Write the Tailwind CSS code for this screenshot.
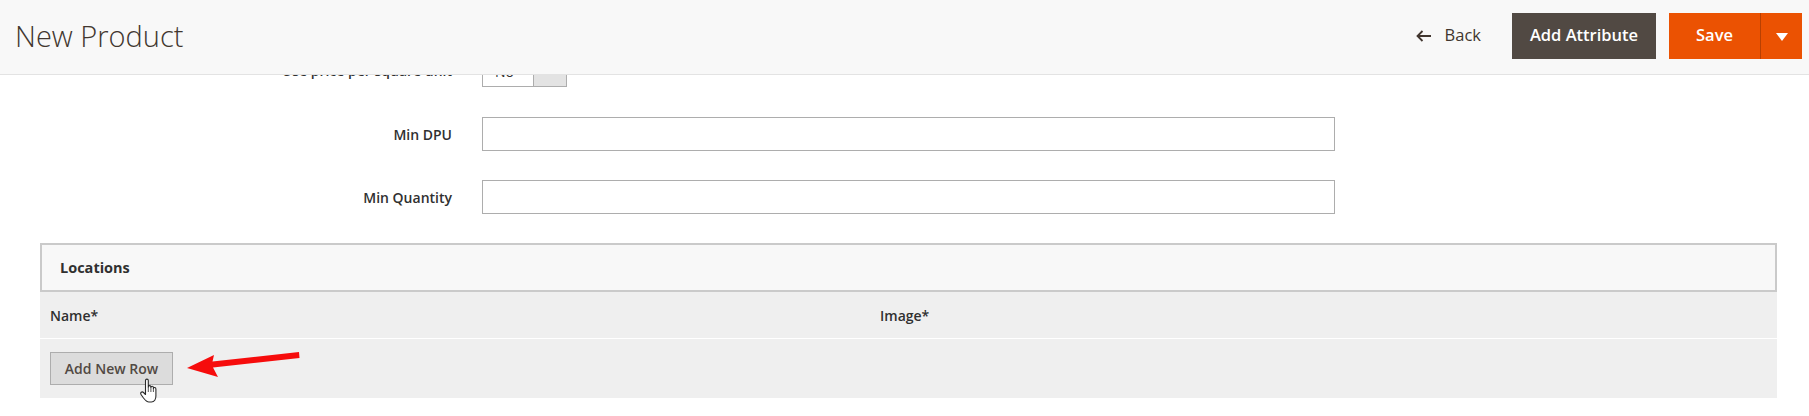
<!DOCTYPE html>
<html lang="en">
<head>
  <meta charset="UTF-8" />
  <title>New Product</title>
  <script src="https://cdn.jsdelivr.net/npm/@tailwindcss/browser@4"></script>
</head>
<body class="bg-white font-['Open_Sans',sans-serif] text-[14px] text-[#303030] overflow-hidden">

  <header class="fixed top-0 left-0 w-full h-[75px] z-10 flex items-center justify-between bg-[#f8f8f8] border-b border-[#e3e3e3] pl-[15px] pr-[7px]">
    <h1 class="text-[29px] font-light text-[#41362f] leading-none -mt-[4px]">New Product</h1>
    <div class="flex items-center -mt-[2px] text-[16.500px]">
      <button class="flex items-center gap-[14px] font-medium text-[#41362f] mr-[31px]">
        <svg width="15" height="12" viewBox="0 0 15 12" fill="none" stroke="#41362f" stroke-width="1.800"><path d="M15 6H1.500M6.500 1 1.500 6l5 5" /></svg>
        <span class="-mt-[2px]">Back</span>
      </button>
      <button class="w-[144px] h-[46px] bg-[#514943] text-white font-semibold pb-[2px]">Add Attribute</button>
      <div class="flex ml-[13px] h-[46px] bg-[#eb5202] text-white font-semibold">
        <button class="w-[91px] pb-[2px]">Save</button>
        <button class="w-[42px] border-l border-[#b84002] flex items-center justify-center">
          <span class="w-0 h-0 border-x-[6px] border-x-transparent border-t-[8px] border-t-white mt-[2px]"></span>
        </button>
      </div>
    </div>
  </header>

  <main class="pt-[53px]">
    <div class="flex items-center h-[34px]">
      <label class="w-[452px] text-right font-semibold">Use price per square unit</label>
      <div class="flex ml-[30px] w-[85px] h-[34px] border border-[#adadad]">
        <span class="w-[51px] border-r border-[#adadad] pl-[12px] pt-[2px] leading-[32px]">No</span>
        <span class="flex-1 bg-[#e3e3e3]"></span>
      </div>
    </div>
    <div class="flex items-center mt-[30px]">
      <label class="w-[452px] text-right font-semibold">Min DPU</label>
      <input type="text" class="ml-[30px] w-[853px] h-[34px] border border-[#adadad] bg-white" />
    </div>
    <div class="flex items-center mt-[29px]">
      <label class="w-[452px] text-right font-semibold">Min Quantity</label>
      <input type="text" class="ml-[30px] w-[853px] h-[34px] border border-[#adadad] bg-white" />
    </div>

    <section class="ml-[40px] w-[1737px] mt-[29px]">
      <div class="h-[49px] flex items-center pl-[18px] bg-[#f8f8f8] border-2 border-[#cacaca] font-bold text-[14.500px]">Locations</div>
      <div class="flex items-center h-[47px] bg-[#efefef] font-semibold pl-[10px] border-b border-white">
        <span class="w-[830px]">Name*</span>
        <span>Image*</span>
      </div>
      <div class="h-[59px] bg-[#efefef] pt-[13px] pl-[10px]">
        <button class="w-[123px] h-[33px] bg-[#dcdcdc] border border-[#adadad] text-[#514943] font-semibold">Add New Row</button>
      </div>
    </section>
  </main>

  <!-- annotation arrow -->
  <svg class="absolute left-[185px] top-[350px]" width="116" height="28" viewBox="0 0 116 28">
    <path d="M2 18 29 5 27.500 11.500 114 2 114.500 8 28 17.500 33 27Z" fill="#f60c0c" />
  </svg>

  <!-- hand cursor -->
  <svg class="absolute left-[139px] top-[377px]" width="20" height="27" viewBox="0 0 20 27">
    <path d="M6.500 14V3.500a1.400 1.400 0 0 1 2.800 0V10c0-1.800 2.600-1.800 2.600 0v.500c0-1.600 2.500-1.600 2.500 0v1c0-1.400 2.500-1.400 2.500 .500V19c0 3-1.500 6-4.500 6H10C7.500 25 6 23 4.500 21L2 17.500C.8 15.800 3 14 4.500 15.500L6.500 17.500Z" fill="#fff" stroke="#2a2a2a" stroke-width="1.100" stroke-linejoin="round" />
    <path d="M9.300 10v5M11.900 10.500v4.500M14.400 11.500v3.500" stroke="#2a2a2a" stroke-width=".8" fill="none" />
  </svg>
</body>
</html>
